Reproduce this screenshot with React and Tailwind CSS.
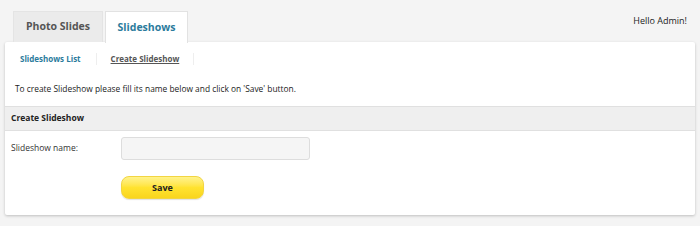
import React, { useState } from 'react';

export default function App() {
  const [name, setName] = useState('');

  return (
    <div className="w-[700px] h-[226px] bg-[#f4f4f4] font-['Open_Sans',sans-serif] text-[#333] overflow-hidden">
      {/* top bar with tabs */}
      <div className="flex items-end justify-between pl-[13px] pr-[13px] pt-[11px]">
        <div className="flex items-end gap-[2px]">
          <div className="h-[31px] w-[90px] flex items-center justify-center bg-[#ebebeb] border-t border-x border-[#e4e4e4] text-[10.5px] font-bold text-[#555]">
            Photo Slides
          </div>
          <div className="h-[32px] w-[83px] flex items-center justify-center bg-white border-t border-x border-[#e2e2e2] text-[10.5px] font-bold text-[#2b7b9c] -mb-px relative z-10">
            Slideshows
          </div>
        </div>
        <div className="self-start mt-[3px] text-[9px] text-[#222]">Hello Admin!</div>
      </div>

      {/* panel */}
      <div className="mx-[5px] bg-white rounded-[2px] shadow-[0_1px_3px_rgba(0,0,0,0.22)] h-[173px] flex flex-col">
        <div className="flex items-center h-[33px] pl-[15px] text-[8px] font-bold">
          <span className="text-[#2b7b9c] pr-[15px]">Slideshows List</span>
          <span className="w-px h-[12px] bg-[#eee]" />
          <span className="text-[#555] underline px-[14px]">Create Slideshow</span>
          <span className="w-px h-[12px] bg-[#eee]" />
        </div>
        <p className="pl-[10px] pt-[8px] h-[31px] text-[8.4px] text-[#222]">
          To create Slideshow please fill its name below and click on 'Save' button.
        </p>
        <div className="h-[25px] flex items-center pl-[6px] bg-[#efefef] border-y border-[#e0e0e0] text-[8.5px] font-bold text-[#222]">
          Create Slideshow
        </div>
        <div className="flex items-center pt-[6px] pl-[6px]">
          <label className="w-[110px] text-[8.5px] text-[#333]">Slideshow name:</label>
          <input
            type="text"
            value={name}
            onChange={(e) => setName(e.target.value)}
            className="w-[189px] h-[23px] rounded-[3px] bg-[#f5f5f5] border border-[#ddd] outline-none px-[4px] text-[9px]"
          />
        </div>
        <div className="pl-[116px] pt-[13px]">
          <button className="w-[83px] h-[23px] rounded-[8px] bg-gradient-to-b from-[#fff38a] via-[#ffe330] to-[#f9d51d] border border-[#f2d542] shadow-[0_1px_1px_rgba(0,0,0,0.12)] text-[9px] font-bold text-[#222]">
            Save
          </button>
        </div>
      </div>
    </div>
  );
}
